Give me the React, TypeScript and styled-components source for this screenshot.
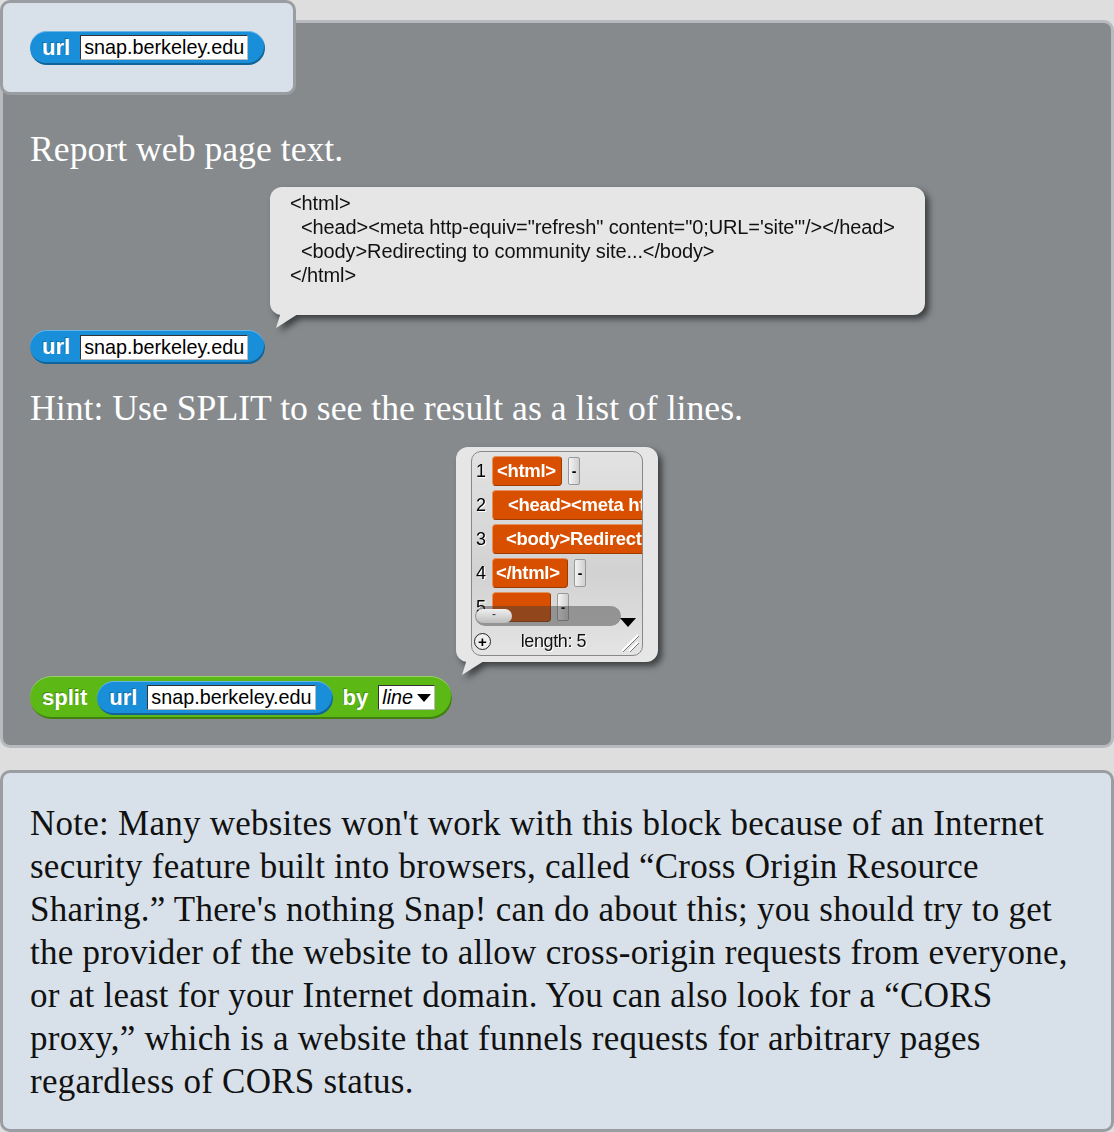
import styled, { createGlobalStyle } from 'styled-components';

const GlobalStyle = createGlobalStyle`
  body {
    margin: 0;
    background: #dedede;
    font-family: "Liberation Serif", serif;
  }
`;

const Page = styled.div`
  width: 1114px;
`;

const Tab = styled.div`
  position: relative;
  z-index: 2;
  box-sizing: border-box;
  width: 296px;
  height: 95px;
  margin-bottom: -75px;
  border: 3px solid #9a9ea2;
  border-radius: 10px;
  background: #d8e1ea;
  display: flex;
  align-items: center;
  padding-left: 27px;
`;

const Panel = styled.div`
  box-sizing: border-box;
  height: 728px;
  border: 3px solid #b7bbbf;
  border-radius: 10px;
  background: #868a8d;
  padding: 106px 0 0 27px;
  display: flex;
  flex-direction: column;
  align-items: flex-start;
`;

const Caption = styled.div<{ $top: number }>`
  margin-top: ${p => p.$top}px;
  color: #fff;
  font-size: 35.7px;
  line-height: 40px;
  white-space: nowrap;
`;

const Bubble = styled.div<{ $left: number; $top: number }>`
  position: relative;
  margin: ${p => p.$top}px 0 0 ${p => p.$left}px;
  background: #e6e6e6;
  border-radius: 12px;
  filter: drop-shadow(4px 4px 3px rgba(0, 0, 0, 0.55));

  &::after {
    content: '';
    position: absolute;
    left: 6px;
    bottom: -13px;
    width: 22px;
    height: 14px;
    background: #e6e6e6;
    clip-path: polygon(0 100%, 20% 0, 100% 0);
  }
`;

const CodeText = styled.pre`
  box-sizing: border-box;
  width: 655px;
  height: 128px;
  margin: 0;
  padding: 4px 20px 0;
  font-family: "Liberation Sans", Arial, sans-serif;
  font-size: 20px;
  line-height: 24px;
  color: #111;
  letter-spacing: -0.1px;
`;

const Block = styled.div<{ $color: string; $height: number; $top?: number }>`
  box-sizing: border-box;
  height: ${p => p.$height}px;
  margin-top: ${p => p.$top ?? 0}px;
  display: flex;
  align-items: center;
  gap: 10px;
  padding: 0 17px 0 12px;
  border-radius: ${p => p.$height / 2}px;
  background: ${p => p.$color};
  box-shadow:
    inset 0 1px 0 rgba(255, 255, 255, 0.35),
    inset -1px -2px 0 rgba(0, 0, 0, 0.3);
`;

const Label = styled.span`
  font-family: "Liberation Sans", Arial, sans-serif;
  font-weight: bold;
  font-size: 22px;
  color: #fff;
  text-shadow: -1px -1px 0 rgba(0, 0, 0, 0.25);
`;

const Slot = styled.span<{ $italic?: boolean }>`
  box-sizing: border-box;
  height: 25px;
  display: flex;
  align-items: center;
  gap: 4px;
  padding: 0 3px;
  background: #fff;
  border: 1px solid #333;
  border-right-color: #bbb;
  border-bottom-color: #bbb;
  font-family: "Liberation Sans", Arial, sans-serif;
  font-size: 19.8px;
  font-style: ${p => (p.$italic ? 'italic' : 'normal')};
  color: #000;
`;

const DropArrow = styled.span`
  width: 0;
  height: 0;
  border-left: 7px solid transparent;
  border-right: 7px solid transparent;
  border-top: 8px solid #000;
`;

const ListBubbleBody = styled.div`
  box-sizing: border-box;
  width: 202px;
  height: 215px;
  padding: 4px 15px 6px;
`;

const ListFrame = styled.div`
  box-sizing: border-box;
  height: 100%;
  border: 1px solid #888;
  border-radius: 10px;
  background: linear-gradient(#e2e2e2, #d2d2d2 60%, #e4e4e4);
  display: flex;
  flex-direction: column;
  overflow: hidden;
`;

const Rows = styled.div`
  position: relative;
  flex: 1;
  overflow: hidden;
  padding: 4px 0 0 4px;
  display: flex;
  flex-direction: column;
  gap: 4px;
`;

const Row = styled.div`
  display: flex;
  align-items: center;
  gap: 6px;
  height: 30px;
  flex-shrink: 0;
`;

const Index = styled.span`
  width: 10px;
  font-family: "Liberation Sans", Arial, sans-serif;
  font-size: 18px;
  color: #000;
  text-shadow: 1px 1px 0 #fff;
`;

const Cell = styled.span<{ $width: number; $indent: number }>`
  box-sizing: border-box;
  flex-shrink: 0;
  width: ${p => p.$width}px;
  height: 30px;
  display: flex;
  align-items: center;
  padding-left: ${p => p.$indent}px;
  border-radius: 4px;
  background: #d84f00;
  border: 1px solid #e9915c;
  border-right-color: #9c3a00;
  border-bottom-color: #9c3a00;
  font-family: "Liberation Sans", Arial, sans-serif;
  font-weight: bold;
  font-size: 18.5px;
  color: #fff;
  white-space: pre;
  overflow: hidden;
  letter-spacing: -0.3px;
`;

const Minus = styled.span`
  box-sizing: border-box;
  width: 12px;
  height: 28px;
  display: flex;
  align-items: center;
  justify-content: center;
  border-radius: 2px;
  background: linear-gradient(90deg, #f4f4f4, #cfcfcf);
  border: 1px solid #999;
  font-family: "Liberation Sans", Arial, sans-serif;
  font-weight: bold;
  font-size: 14px;
  color: #000;
`;

const ScrollTrack = styled.div`
  position: absolute;
  left: 3px;
  top: 154px;
  width: 146px;
  height: 20px;
  border-radius: 10px;
  background: rgba(60, 60, 60, 0.45);
`;

const ScrollThumb = styled.div`
  position: absolute;
  left: 1px;
  top: 3px;
  width: 36px;
  height: 14px;
  border-radius: 7px;
  background: linear-gradient(#f0f0f0, #bdbdbd);
  font-family: "Liberation Sans", Arial, sans-serif;
  font-size: 12px;
  line-height: 10px;
  text-align: center;
  color: #333;
`;

const ScrollArrow = styled.div`
  position: absolute;
  left: 148px;
  top: 166px;
  border-left: 8px solid transparent;
  border-right: 8px solid transparent;
  border-top: 9px solid #000;
`;

const Footer = styled.div`
  height: 28px;
  flex-shrink: 0;
  display: flex;
  align-items: center;
  padding: 0 2px 0 2px;
`;

const PlusButton = styled.span`
  box-sizing: border-box;
  width: 17px;
  height: 17px;
  border-radius: 50%;
  border: 1.5px solid #222;
  display: flex;
  align-items: center;
  justify-content: center;
  font-family: "Liberation Sans", Arial, sans-serif;
  font-weight: bold;
  font-size: 15px;
  line-height: 1;
  background: #eee;
`;

const LengthLabel = styled.span`
  flex: 1;
  text-align: center;
  font-family: "Liberation Sans", Arial, sans-serif;
  font-size: 18px;
  letter-spacing: -0.4px;
  color: #111;
  text-shadow: 1px 1px 0 #fff;
`;

const NoteCard = styled.div`
  box-sizing: border-box;
  height: 362px;
  margin-top: 22px;
  border: 3px solid #9a9ea2;
  border-radius: 10px;
  background: #d8e1ea;
  padding: 29px 0 0 27px;
  font-size: 35px;
  line-height: 43px;
  letter-spacing: 0.25px;
  color: #111;
  white-space: nowrap;
`;

const UrlBlock = ({ top }: { top?: number }) => (
  <Block $color="#1a8fd9" $height={34} $top={top}>
    <Label>url</Label>
    <Slot>snap.berkeley.edu</Slot>
  </Block>
);

const Grip = () => (
  <svg width="24" height="24" viewBox="0 0 24 24">
    <path d="M22 6 L6 22 M22 13 L13 22" stroke="#fff" strokeWidth="2" />
    <path d="M23 7 L7 23 M23 14 L14 23" stroke="#777" strokeWidth="1" />
  </svg>
);

const items = [
  { text: '<html>', width: 70, indent: 4 },
  { text: '<head><meta http-equiv', width: 200, indent: 15 },
  { text: '<body>Redirecting', width: 200, indent: 13 },
  { text: '</html>', width: 76, indent: 3 },
  { text: '', width: 59, indent: 3 },
];

const App = () => {
  const lines = [
    "Note: Many websites won't work with this block because of an Internet",
    'security feature built into browsers, called \u201CCross Origin Resource',
    "Sharing.\u201D There's nothing Snap! can do about this; you should try to get",
    'the provider of the website to allow cross-origin requests from everyone,',
    'or at least for your Internet domain. You can also look for a \u201CCORS',
    'proxy,\u201D which is a website that funnels requests for arbitrary pages',
    'regardless of CORS status.',
  ];

  return (
    <Page>
      <GlobalStyle />
      <Tab>
        <UrlBlock />
      </Tab>
      <Panel>
        <Caption $top={0}>Report web page text.</Caption>
        <Bubble $left={240} $top={18}>
          <CodeText>
            {'<html>\n  <head><meta http-equiv="refresh" content="0;URL=\'site\'"/></head>\n  <body>Redirecting to community site...</body>\n</html>'}
          </CodeText>
        </Bubble>
        <UrlBlock top={15} />
        <Caption $top={24}>Hint: Use SPLIT to see the result as a list of lines.</Caption>
        <Bubble $left={426} $top={19}>
          <ListBubbleBody>
            <ListFrame>
              <Rows>
                {items.map((it, i) => (
                  <Row key={i}>
                    <Index>{i + 1}</Index>
                    <Cell $width={it.width} $indent={it.indent}>{it.text}</Cell>
                    {it.width < 100 && <Minus>-</Minus>}
                  </Row>
                ))}
                <ScrollTrack>
                  <ScrollThumb>-</ScrollThumb>
                </ScrollTrack>
                <ScrollArrow />
              </Rows>
              <Footer>
                <PlusButton>+</PlusButton>
                <LengthLabel>length: 5</LengthLabel>
                <Grip />
              </Footer>
            </ListFrame>
          </ListBubbleBody>
        </Bubble>
        <Block $color="#5cb815" $height={43} $top={14}>
          <Label>split</Label>
          <UrlBlock />
          <Label>by</Label>
          <Slot $italic>line<DropArrow /></Slot>
        </Block>
      </Panel>
      <NoteCard>
        {lines.map((l, i) => (
          <div key={i}>{l}</div>
        ))}
      </NoteCard>
    </Page>
  );
};

export default App;
